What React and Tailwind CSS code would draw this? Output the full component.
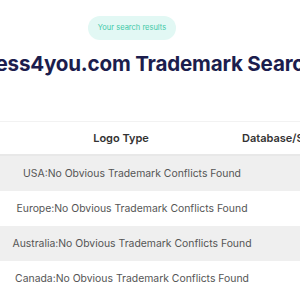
export default function App() {
  const rows = [
    "USA:No Obvious Trademark Conflicts Found",
    "Europe:No Obvious Trademark Conflicts Found",
    "Australia:No Obvious Trademark Conflicts Found",
    "Canada:No Obvious Trademark Conflicts Found",
  ];

  return (
    <div className="w-[300px] h-[300px] overflow-hidden bg-white font-['Inter',sans-serif]">
      {/* Heading */}
      <div className="w-[264px] flex flex-col items-center pt-4">
        <span className="h-6 px-[10px] flex items-center rounded-full bg-[#e2f8f4] text-[7.5px] text-[#3ec9a7]">
          Your search results
        </span>
        <h1 className="mt-[12px] mr-[7px] whitespace-nowrap text-[20.6px] leading-[24px] font-bold text-[#1c1d4d] tracking-[-0.2px]">
          Business4you.com Trademark Search
        </h1>
      </div>

      {/* Results table */}
      <div className="mt-[45px] w-[340px]">
        <div className="flex h-[35px] items-center border-t border-[#f2f2f2] border-b-2 border-b-[#e8e8e8] text-[11px] font-semibold text-[#333]">
          <div className="w-[242px] text-center">Logo Type</div>
          <div className="whitespace-nowrap">Database/Status</div>
        </div>
        {rows.map((text, i) => (
          <div
            key={i}
            className={`flex h-[35px] items-center text-[10.4px] text-[#555] ${
              i % 2 === 0 ? "bg-[#efefef]" : "bg-white"
            }`}
          >
            <div className="w-[264px] text-center whitespace-nowrap">{text}</div>
          </div>
        ))}
      </div>
    </div>
  );
}
